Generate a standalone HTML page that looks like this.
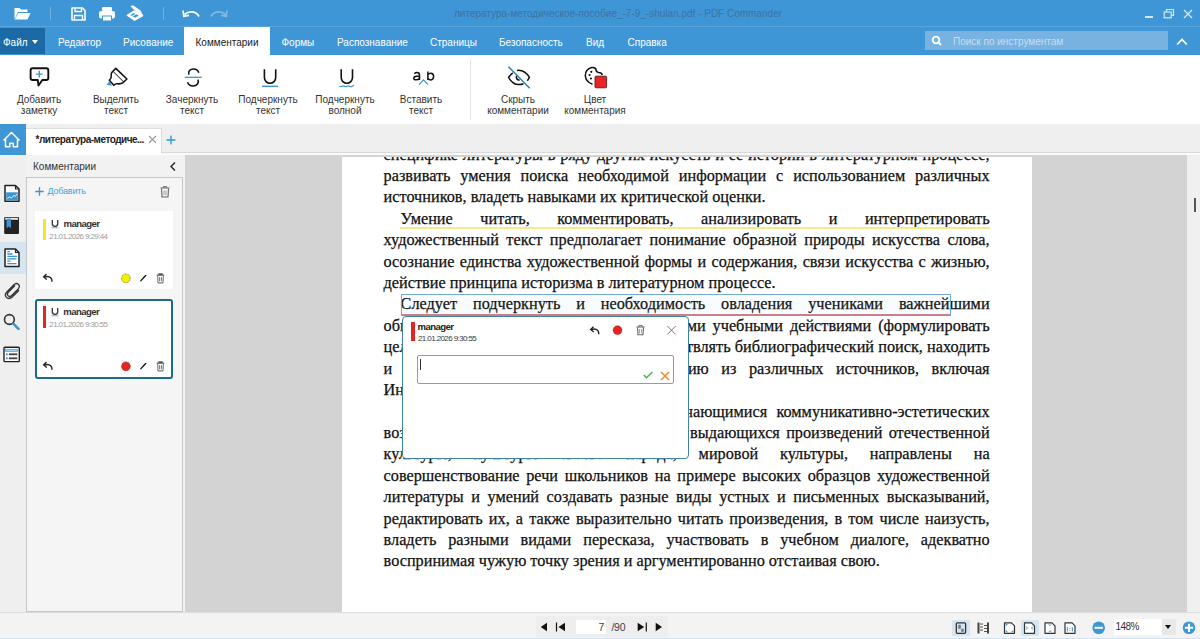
<!DOCTYPE html>
<html><head><meta charset="utf-8">
<style>
*{box-sizing:border-box}
html,body{margin:0;padding:0}
body{width:1200px;height:639px;overflow:hidden;position:relative;background:#f3f3f3;font-family:"Liberation Sans",sans-serif;color:#222}
.abs{position:absolute}
svg{position:absolute;overflow:visible}
.mi{position:absolute;top:0;height:27px;line-height:31px;font-size:10px;color:#fff;white-space:nowrap}
.rl{position:absolute;font-size:10px;line-height:11px;color:#333;text-align:center;white-space:nowrap}
.doc{font-family:"Liberation Serif",serif;font-size:16.25px;line-height:21.42px;color:#111;-webkit-text-stroke:0.25px #111}
.ln{position:absolute;left:42px;width:606px;height:21.42px;white-space:nowrap;text-align:justify;text-align-last:justify}
.ln.i{left:59px;width:589px}
.ln.l{text-align:left;text-align-last:left}
.mgr{position:absolute;font-size:9.6px;font-weight:bold;letter-spacing:-0.6px;color:#333;white-space:nowrap;line-height:12px}
.dt{position:absolute;font-size:8px;letter-spacing:-0.6px;color:#9c9c9c;white-space:nowrap;line-height:10px}
</style></head><body>
<!-- ===== title bar ===== -->
<div class="abs" style="left:0;top:0;width:1200px;height:27px;background:#3e96d6"></div>
<div class="abs" style="left:0;top:26px;width:1200px;height:1px;background:#58a5dd"></div>
<div class="abs" style="left:454px;top:8px;font-size:10px;line-height:12px;color:#41719e;white-space:nowrap">литература-методическое-пособие_-7-9_-shulan.pdf - PDF Commander</div>
<!-- folder -->
<svg style="left:12px;top:5px" width="20" height="17" viewBox="0 0 20 17">
  <path d="M2.5 3 H7.5 L9 4.5 H15.5 V7 H6 L2.5 14.5 Z" fill="#fff"/>
  <path d="M6.3 8 H18.5 L15.5 14.5 H2.8 Z" fill="#fff"/>
</svg>
<div class="abs" style="left:50px;top:7px;width:1px;height:13px;background:#6cb0e2"></div>
<!-- save -->
<svg style="left:70px;top:6px" width="17" height="16" viewBox="0 0 17 16">
  <path d="M2 2 H12.5 L15 4.5 V14 H2 Z" fill="none" stroke="#fff" stroke-width="1.6" stroke-linejoin="round"/>
  <path d="M5 2 V5.5 H11.5 V2" fill="none" stroke="#fff" stroke-width="1.4"/>
  <path d="M4.5 14 V9.5 H12.5 V14" fill="none" stroke="#fff" stroke-width="1.4"/>
</svg>
<!-- print -->
<svg style="left:98px;top:6px" width="18" height="16" viewBox="0 0 18 16">
  <rect x="4" y="1" width="10" height="4" rx="1" fill="#fff"/>
  <rect x="1" y="5" width="16" height="7.5" rx="2" fill="#fff"/>
  <rect x="4" y="9.5" width="10" height="5.5" rx="0.5" fill="#3e96d6"/>
  <rect x="5" y="10.5" width="8" height="4" fill="#fff"/>
</svg>
<!-- scanner -->
<svg style="left:122px;top:2px" width="26" height="22" viewBox="0 0 26 22">
  <path d="M4.8 13.3 L12 8.8 L21 13.8 L12.5 18.6 Z" fill="#fff" stroke="#fff" stroke-width="0.8" stroke-linejoin="round"/>
  <path d="M8.3 13.1 L11.8 11 L16.8 13.6 L13.3 15.8 Z" fill="#3e96d6"/>
  <path d="M10 14.3 L14.6 11.7" stroke="#fff" stroke-width="0.9"/>
  <path d="M8.8 4.3 L11 3.6 L17.8 8.3 L20.8 13.3 L14 9.6 Z" fill="#fff" stroke="#fff" stroke-width="0.6" stroke-linejoin="round"/>
</svg>
<div class="abs" style="left:163px;top:7px;width:1px;height:13px;background:#6cb0e2"></div>
<!-- undo / redo -->
<svg style="left:181px;top:8px" width="20" height="11" viewBox="0 0 20 11">
  <path d="M18 8.5 C15 3 8 2.5 3.5 6.5" fill="none" stroke="#fff" stroke-width="1.7"/>
  <path d="M2 2.5 L2.8 8.2 L8 7.3" fill="none" stroke="#fff" stroke-width="1.7"/>
</svg>
<svg style="left:209px;top:8px" width="20" height="11" viewBox="0 0 20 11" opacity="0.35">
  <path d="M2 8.5 C5 3 12 2.5 16.5 6.5" fill="none" stroke="#fff" stroke-width="1.7"/>
  <path d="M18 2.5 L17.2 8.2 L12 7.3" fill="none" stroke="#fff" stroke-width="1.7"/>
</svg>
<!-- window controls -->
<div class="abs" style="left:1145px;top:16px;width:8px;height:1.6px;background:#d6e8f6"></div>
<svg style="left:1163px;top:8px" width="12" height="11" viewBox="0 0 12 11">
  <rect x="1.2" y="4" width="7" height="5.8" fill="none" stroke="#d6e8f6" stroke-width="1.2"/>
  <path d="M3.5 4 V1.5 H10.5 V7.3 H8.2" fill="none" stroke="#d6e8f6" stroke-width="1.2"/>
</svg>
<svg style="left:1183px;top:9px" width="10" height="10" viewBox="0 0 10 10">
  <path d="M1 1 L9 9 M9 1 L1 9" stroke="#d6e8f6" stroke-width="1.3"/>
</svg>

<!-- ===== menu bar ===== -->
<div class="abs" style="left:0;top:27px;width:1200px;height:28px;background:#3e96d6"></div>
<div class="abs" style="left:0;top:28px;width:45px;height:26px;background:#1b6aa6"></div>
<div class="mi" style="left:3px;top:27px">Файл</div>
<div class="abs" style="left:32px;top:40px;width:0;height:0;border-left:3.5px solid transparent;border-right:3.5px solid transparent;border-top:4px solid #fff"></div>
<div class="mi" style="left:58px;top:27px">Редактор</div>
<div class="mi" style="left:123px;top:27px">Рисование</div>
<div class="abs" style="left:184px;top:27px;width:86px;height:28px;background:#fff"></div>
<div class="mi" style="left:195.5px;top:27px;color:#222">Комментарии</div>
<div class="mi" style="left:281.5px;top:27px">Формы</div>
<div class="mi" style="left:337px;top:27px">Распознавание</div>
<div class="mi" style="left:430px;top:27px">Страницы</div>
<div class="mi" style="left:499px;top:27px">Безопасность</div>
<div class="mi" style="left:586px;top:27px">Вид</div>
<div class="mi" style="left:627.5px;top:27px">Справка</div>
<div class="abs" style="left:925px;top:31px;width:243px;height:19px;background:#77b2e0"></div>
<svg style="left:931px;top:35px" width="12" height="12" viewBox="0 0 12 12">
  <circle cx="5" cy="5" r="3.3" fill="none" stroke="#fff" stroke-width="1.8"/>
  <path d="M7.5 7.5 L10 10" stroke="#fff" stroke-width="2"/>
</svg>
<div class="mi" style="left:953px;top:25.5px;color:#c8dff2">Поиск по инструментам</div>
<svg style="left:1176px;top:37px" width="12" height="9" viewBox="0 0 12 9">
  <path d="M1.2 7.5 L6 2.5 L10.8 7.5" fill="none" stroke="#fff" stroke-width="1.8"/>
</svg>
<!-- ===== ribbon ===== -->
<div class="abs" style="left:0;top:55px;width:1200px;height:69px;background:#fff"></div>
<!-- add note -->
<svg style="left:25px;top:62px" width="30" height="30" viewBox="0 0 30 30">
  <path d="M7.7 6.3 H21.2 Q23.3 6.3 23.3 8.4 V15.9 Q23.3 18 21.2 18 H17.3 L13.5 23.5 L12.8 18 H7.7 Q5.6 18 5.6 15.9 V8.4 Q5.6 6.3 7.7 6.3 Z" fill="#fff" stroke="#111" stroke-width="1.9" stroke-linejoin="round"/>
  <path d="M11 12.1 H17.6 M14.3 8.8 V15.4" stroke="#3a95d0" stroke-width="1.4"/>
</svg>
<!-- highlighter -->
<svg style="left:100px;top:62px" width="30" height="30" viewBox="0 0 30 30">
  <path d="M15.8 6.3 L26.9 17 L23.5 20.3 L12.6 9.6 Z" fill="#fff" stroke="#111" stroke-width="1.6" stroke-linejoin="round"/>
  <path d="M12.6 9.6 Q10.5 11.3 11.2 13.5 Q11.8 16 9.3 18.3 L13.8 23.3 Q15.5 21.3 17.8 21.8 Q20.5 22.3 23.5 20.3" fill="#fff" stroke="#111" stroke-width="1.6" stroke-linejoin="round"/>
  <path d="M9.3 19.3 L6.6 22.8 L12 23.8 Z" fill="#3a95d0"/>
</svg>
<!-- strike -->
<svg style="left:178px;top:62px" width="30" height="30" viewBox="0 0 30 30">
  <path d="M11 12.6 C9.6 9.3 12.3 7 15.5 7 C18 7 20 8.3 20.8 10.8" fill="none" stroke="#111" stroke-width="1.6"/>
  <path d="M19.8 17.6 C21.6 20.6 18.8 24 15.3 24 C12.5 24 10.3 22.5 9.5 20.3" fill="none" stroke="#111" stroke-width="1.6"/>
  <path d="M6.8 15.3 H23.7" stroke="#3a95d0" stroke-width="1.3"/>
</svg>
<!-- underline -->
<svg style="left:255px;top:62px" width="30" height="30" viewBox="0 0 30 30">
  <path d="M9.4 7.2 V15.6 A5.65 5.65 0 0 0 20.7 15.6 V7.2" fill="none" stroke="#111" stroke-width="1.6"/>
  <path d="M7 24.3 H23" stroke="#3a95d0" stroke-width="1.4"/>
</svg>
<!-- wavy -->
<svg style="left:332px;top:62px" width="30" height="30" viewBox="0 0 30 30">
  <path d="M9.2 7.2 V15.6 A5.65 5.65 0 0 0 20.5 15.6 V7.2" fill="none" stroke="#111" stroke-width="1.6"/>
  <path d="M7.5 23.8 Q8.7 25.2 10 24.3 Q11.3 23.3 12.5 24.3 Q13.8 25.2 15 24.3 Q16.3 23.3 17.5 24.3 Q18.8 25.2 20 24.3 Q21.2 23.4 22 23.8" fill="none" stroke="#3a95d0" stroke-width="1.2"/>
</svg>
<!-- insert text -->
<svg style="left:410px;top:68px" width="28" height="18" viewBox="0 0 28 18">
  <path d="M4.3 5.8 Q5.5 4.6 7 4.6 Q9.5 4.6 9.5 7.2 V12.1" fill="none" stroke="#111" stroke-width="1.5"/>
  <path d="M9.5 8.4 Q8.3 8.1 6.5 8.3 Q3.8 8.6 3.8 10.2 Q3.8 11.8 6 11.8 Q8.3 11.8 9.5 10.4" fill="none" stroke="#111" stroke-width="1.5"/>
  <path d="M17.9 3.4 V12.1" stroke="#111" stroke-width="1.5"/>
  <path d="M17.9 6.6 Q19 5.2 20.8 5.2 Q23.6 5.2 23.6 8.6 Q23.6 11.9 20.8 11.9 Q19 11.9 17.9 10.6" fill="none" stroke="#111" stroke-width="1.5"/>
  <path d="M9 16.6 L13.5 11.9 L18 16.6" fill="none" stroke="#3a95d0" stroke-width="1.2"/>
</svg>
<div class="abs" style="left:470px;top:59px;width:1px;height:61px;background:#e3e3e3"></div>
<!-- eye slash -->
<svg style="left:504px;top:62px" width="30" height="30" viewBox="0 0 30 30">
  <path d="M13 8.4 Q20.5 7.5 25.4 15.3 Q24.5 17.2 23.3 18.8" fill="none" stroke="#111" stroke-width="1.5"/>
  <path d="M19.5 21.8 Q10 25 4.6 15.5 Q6.3 12.6 8.8 10.8" fill="none" stroke="#111" stroke-width="1.5"/>
  <path d="M12.6 13.6 Q11.5 17.5 15.6 18.3" fill="none" stroke="#111" stroke-width="1.5"/>
  <path d="M4.5 4.8 L25.7 26.3" stroke="#2586a8" stroke-width="1.5"/>
</svg>
<!-- palette -->
<svg style="left:581px;top:62px" width="30" height="30" viewBox="0 0 30 30">
  <path d="M21.4 13 Q20.5 10.6 17.6 10.5 Q15 10.3 15 7.6 Q14.6 5 10.6 5.5 Q4.6 7 4.3 13.5 Q4.5 19.5 11.5 22.3" fill="none" stroke="#111" stroke-width="1.5"/>
  <circle cx="10.3" cy="9.8" r="1.1" fill="#111"/>
  <circle cx="8.6" cy="13" r="1.1" fill="#111"/>
  <circle cx="9.9" cy="16.5" r="1.1" fill="#111"/>
  <rect x="14" y="14.2" width="11.6" height="11.6" rx="1" fill="#e82424" stroke="#5a1a1a" stroke-width="0.9"/>
</svg>
<div class="rl" style="left:0;width:78px;top:93.7px">Добавить<br>заметку</div>
<div class="rl" style="left:77px;width:78px;top:93.7px">Выделить<br>текст</div>
<div class="rl" style="left:153px;width:78px;top:93.7px">Зачеркнуть<br>текст</div>
<div class="rl" style="left:229px;width:78px;top:93.7px">Подчеркнуть<br>текст</div>
<div class="rl" style="left:306px;width:78px;top:93.7px">Подчеркнуть<br>волной</div>
<div class="rl" style="left:382px;width:78px;top:93.7px">Вставить<br>текст</div>
<div class="rl" style="left:478px;width:80px;top:93.7px">Скрыть<br>комментарии</div>
<div class="rl" style="left:555px;width:80px;top:93.7px">Цвет<br>комментария</div>
<!-- ===== tab row ===== -->
<div class="abs" style="left:0;top:124px;width:1200px;height:31px;background:#efefef"></div>
<div class="abs" style="left:0;top:124px;width:26px;height:31px;background:#3e96d6"></div>
<svg style="left:0;top:124px" width="26" height="31" viewBox="0 0 26 31">
  <path d="M3.5 16.5 L11.5 8.5 L19.5 16.5 M5.5 14.8 V22.7 H9.8 V19.3 H13.2 V22.7 H17.5 V14.8" fill="none" stroke="#fff" stroke-width="1.5" stroke-linejoin="round"/>
</svg>
<div class="abs" style="left:26px;top:128px;width:136px;height:27px;background:#fff;border-top:1.5px solid #dedede;border-right:1px solid #dcdcdc"></div>
<div class="abs" style="left:35.5px;top:134px;font-size:10px;line-height:12px;font-weight:bold;letter-spacing:-0.5px;color:#222;white-space:nowrap">*литература-методиче...</div>
<svg style="left:148px;top:135px" width="9" height="9" viewBox="0 0 9 9">
  <path d="M1 1 L8 8 M8 1 L1 8" stroke="#9a9a9a" stroke-width="1.1"/>
</svg>
<svg style="left:166px;top:135px" width="10" height="10" viewBox="0 0 10 10">
  <path d="M0.5 5 H9.5 M5 0.5 V9.5" stroke="#2b9bd4" stroke-width="1.4"/>
</svg>
<div class="abs" style="left:161px;top:152px;width:1039px;height:1px;background:#d9d9d9"></div>
<div class="abs" style="left:161px;top:153px;width:1039px;height:2px;background:#fbfbfb"></div>

<!-- ===== left icon column ===== -->
<div class="abs" style="left:0;top:155px;width:26px;height:457px;background:#efefef"></div>
<div class="abs" style="left:0;top:242px;width:25.5px;height:32px;background:#d5e5f1"></div>
<!-- doc chart -->
<svg style="left:0;top:180px" width="25" height="25" viewBox="0 0 25 25">
  <path d="M5 5.5 H15.5 L19 9 V21.3 H5 Z" fill="#fff" stroke="#222" stroke-width="1.5" stroke-linejoin="round"/>
  <path d="M15.5 5.5 V9 H19" fill="none" stroke="#222" stroke-width="1.2"/>
  <rect x="6.2" y="12.3" width="11.6" height="8" fill="#3a95d0"/>
  <path d="M7.2 18.5 L9.5 17 L11.5 17.8 L14 15.5 L15.5 16.3 L17 14" fill="none" stroke="#fff" stroke-width="0.9"/>
</svg>
<!-- book -->
<svg style="left:0;top:213px" width="25" height="25" viewBox="0 0 25 25">
  <rect x="4.2" y="4" width="14.8" height="17" rx="1" fill="#222"/>
  <rect x="5.2" y="4.8" width="12.8" height="2" fill="#e8e8e8"/>
  <path d="M6.5 5.8 H11 V15.3 L8.75 13.5 L6.5 15.3 Z" fill="#3a95d0"/>
</svg>
<!-- doc lines (selected) -->
<svg style="left:0;top:245px" width="25" height="25" viewBox="0 0 25 25">
  <path d="M5 4 H15.5 L19 7.5 V21.5 H5 Z" fill="#fff" stroke="#222" stroke-width="1.5" stroke-linejoin="round"/>
  <path d="M15.5 4 V7.5 H19" fill="none" stroke="#222" stroke-width="1.2"/>
  <path d="M7.3 6.6 H10 M7.3 9 H12.5 M7.3 11.4 H17 M7.3 13.8 H16.5 M7.3 16.2 H10.5 M7.3 18.6 H16.5" stroke="#3a95d0" stroke-width="1.3"/>
</svg>
<!-- paperclip -->
<svg style="left:0;top:280px" width="25" height="20" viewBox="0 0 25 20">
  <path d="M15 5.5 L8.2 12.3 Q6.5 14.5 8.3 16 Q10 17.3 12 15.3 L18.2 9 Q20.5 6.3 18.3 4.3 Q16.2 2.5 13.7 5 L6.8 12 Q4 15.3 6.5 17.6 Q9.3 19.8 12.8 16.5 L19 10.2" fill="none" stroke="#333" stroke-width="1.3"/>
</svg>
<!-- search -->
<svg style="left:0;top:310px" width="25" height="25" viewBox="0 0 25 25">
  <circle cx="9.4" cy="9.5" r="4.9" fill="none" stroke="#333" stroke-width="1.6"/>
  <path d="M13.5 13.8 L18.5 18.8" stroke="#3a95d0" stroke-width="2.6" stroke-linecap="round"/>
</svg>
<!-- list -->
<svg style="left:0;top:342px" width="25" height="25" viewBox="0 0 25 25">
  <rect x="4" y="5.3" width="15.3" height="14.3" rx="0.8" fill="#fff" stroke="#222" stroke-width="1.4"/>
  <rect x="5.6" y="7.2" width="12" height="2.3" fill="#9fd0ee" stroke="#3a95d0" stroke-width="0.6"/>
  <circle cx="6.8" cy="12.3" r="1.1" fill="#3a95d0"/>
  <circle cx="6.8" cy="16.3" r="1.1" fill="#3a95d0"/>
  <rect x="8.8" y="11.4" width="8.5" height="1.8" fill="#444"/>
  <rect x="8.8" y="15.4" width="8.5" height="1.8" fill="#444"/>
</svg>

<!-- ===== comments panel ===== -->
<div class="abs" style="left:26px;top:155px;width:159px;height:457px;background:#f2f2f2"></div>
<div class="abs" style="left:33px;top:161px;font-size:10px;line-height:12px;color:#333;white-space:nowrap">Комментарии</div>
<svg style="left:169px;top:161px" width="8" height="11" viewBox="0 0 8 11">
  <path d="M6 1.5 L2 5.5 L6 9.5" fill="none" stroke="#222" stroke-width="1.4"/>
</svg>
<div class="abs" style="left:26px;top:177px;width:156.5px;height:435px;background:#f5f5f5;border:1px solid #c6c6c6"></div>
<svg style="left:35px;top:187px" width="9" height="9" viewBox="0 0 9 9">
  <path d="M0.3 4.5 H8.7 M4.5 0.3 V8.7" stroke="#3a95d0" stroke-width="1.3"/>
</svg>
<div class="abs" style="left:47.5px;top:186px;font-size:9px;line-height:11px;letter-spacing:-0.2px;color:#4d9fd6;white-space:nowrap">Добавить</div>
<svg style="left:159px;top:185px" width="12" height="13" viewBox="0 0 12 13">
  <path d="M1.5 3 H10.5 M4.3 3 V1.7 H7.7 V3" fill="none" stroke="#666" stroke-width="1"/>
  <path d="M2.5 3.5 L3 12 H9 L9.5 3.5" fill="none" stroke="#666" stroke-width="1.1"/>
  <path d="M5 5.5 V10.2 M7 5.5 V10.2" stroke="#888" stroke-width="0.8"/>
</svg>

<!-- card 1 -->
<div class="abs" style="left:35px;top:211px;width:137.5px;height:78px;background:#fff"></div>
<div class="abs" style="left:42.8px;top:218.6px;width:3.3px;height:21px;background:#f3e626"></div>
<svg style="left:50px;top:219px" width="10" height="10" viewBox="0 0 10 10">
  <path d="M2.3 1 V4.8 Q2.3 7.4 5 7.4 Q7.7 7.4 7.7 4.8 V1" fill="none" stroke="#333" stroke-width="1.3"/>
  <path d="M1.5 8.8 H8.5" stroke="#5aa5d8" stroke-width="0.9"/>
</svg>
<div class="mgr" style="left:63.5px;top:218.3px">manager</div>
<div class="dt" style="left:49.3px;top:231.6px">21.01.2026 9:29:44</div>
<svg style="left:42px;top:272px" width="12" height="12" viewBox="0 0 12 12">
  <path d="M2 5 Q6.5 3.5 9 6 Q10 7.2 10 9.8" fill="none" stroke="#222" stroke-width="1.4"/>
  <path d="M4.5 2 L1.7 5 L4.8 7.5" fill="none" stroke="#222" stroke-width="1.4"/>
</svg>
<svg style="left:120px;top:272px" width="12" height="12" viewBox="0 0 12 12">
  <circle cx="5.9" cy="6.3" r="4.4" fill="#f4ee00" stroke="#6a6a20" stroke-width="0.7" stroke-dasharray="1 0.6"/>
</svg>
<svg style="left:138px;top:273px" width="10" height="10" viewBox="0 0 10 10">
  <path d="M1.7 8.6 L2.4 7.2 L7.2 2.1 Q8.2 1.6 8.7 2.6 L3.4 8 Z" fill="#111"/>
</svg>
<svg style="left:155px;top:272px" width="11" height="12" viewBox="0 0 11 12">
  <path d="M1.8 3.2 H9.2 M4 3 V1.9 H7 V3" fill="none" stroke="#555" stroke-width="1.2"/>
  <path d="M2.6 3.6 L3 10.4 Q3 10.9 3.5 10.9 H7.5 Q8 10.9 8 10.4 L8.4 3.6" fill="none" stroke="#777" stroke-width="1.1"/>
  <path d="M4.6 5.2 V9.2 M6.4 5.2 V9.2" stroke="#666" stroke-width="0.9"/>
</svg>

<!-- card 2 -->
<div class="abs" style="left:34.5px;top:298.5px;width:138.5px;height:80px;background:#fff;border:2px solid #1c6a8a;border-radius:3px"></div>
<div class="abs" style="left:42.6px;top:306.4px;width:3.4px;height:21.2px;background:#e42525"></div>
<svg style="left:50px;top:307px" width="10" height="10" viewBox="0 0 10 10">
  <path d="M2.3 1 V4.8 Q2.3 7.4 5 7.4 Q7.7 7.4 7.7 4.8 V1" fill="none" stroke="#333" stroke-width="1.3"/>
  <path d="M1.5 8.8 H8.5" stroke="#5aa5d8" stroke-width="0.9"/>
</svg>
<div class="mgr" style="left:63.3px;top:306.3px">manager</div>
<div class="dt" style="left:49.3px;top:319.6px">21.01.2026 9:30:55</div>
<svg style="left:42px;top:360px" width="12" height="12" viewBox="0 0 12 12">
  <path d="M2 5 Q6.5 3.5 9 6 Q10 7.2 10 9.8" fill="none" stroke="#222" stroke-width="1.4"/>
  <path d="M4.5 2 L1.7 5 L4.8 7.5" fill="none" stroke="#222" stroke-width="1.4"/>
</svg>
<svg style="left:120px;top:360px" width="12" height="12" viewBox="0 0 12 12">
  <circle cx="5.9" cy="6.3" r="4.4" fill="#e82222" stroke="#801010" stroke-width="0.7" stroke-dasharray="1 0.6"/>
</svg>
<svg style="left:138px;top:361px" width="10" height="10" viewBox="0 0 10 10">
  <path d="M1.7 8.6 L2.4 7.2 L7.2 2.1 Q8.2 1.6 8.7 2.6 L3.4 8 Z" fill="#111"/>
</svg>
<svg style="left:155px;top:360px" width="11" height="12" viewBox="0 0 11 12">
  <path d="M1.8 3.2 H9.2 M4 3 V1.9 H7 V3" fill="none" stroke="#555" stroke-width="1.2"/>
  <path d="M2.6 3.6 L3 10.4 Q3 10.9 3.5 10.9 H7.5 Q8 10.9 8 10.4 L8.4 3.6" fill="none" stroke="#777" stroke-width="1.1"/>
  <path d="M4.6 5.2 V9.2 M6.4 5.2 V9.2" stroke="#666" stroke-width="0.9"/>
</svg>
<!-- ===== document area ===== -->
<div class="abs" style="left:185px;top:155px;width:1002px;height:457px;background:#d3d3d3"></div>
<div class="abs" style="left:182.5px;top:155px;width:2.5px;height:457px;background:#f2f2f2"></div>
<div class="abs" style="left:1187px;top:155px;width:13px;height:457px;background:#f0f0f0"></div>
<div class="abs" style="left:1193.5px;top:198px;width:2px;height:13.5px;background:#555"></div>
<div id="page" class="abs doc" style="left:341.6px;top:157px;width:690.4px;height:454.5px;background:#fff;overflow:hidden">
<div class="ln" style="top:-12.50px">специфике литературы в ряду других искусств и ее истории в литературном процессе,</div>
<div class="ln" style="top:8.92px">развивать умения поиска необходимой информации с использованием различных</div>
<div class="ln l" style="top:30.34px">источников, владеть навыками их критической оценки.</div>
<div class="ln i" style="top:51.76px">Умение читать, комментировать, анализировать и интерпретировать</div>
<div class="ln" style="top:73.18px">художественный текст предполагает понимание образной природы искусства слова,</div>
<div class="ln" style="top:94.60px">осознание единства художественной формы и содержания, связи искусства с жизнью,</div>
<div class="ln l" style="top:116.02px">действие принципа историзма в литературном процессе.</div>
<div class="ln i" style="top:137.44px">Следует подчеркнуть и необходимость овладения учениками важнейшими</div>
<div class="ln" style="top:158.86px">общеучебными умениями и универсальными учебными действиями (формулировать</div>
<div class="ln" style="top:180.28px">цели деятельности, планировать ее, осуществлять библиографический поиск, находить</div>
<div class="ln" style="top:201.70px">и обрабатывать необходимую информацию из различных источников, включая</div>
<div class="ln l" style="top:223.12px">Интернет и др.).</div>
<div class="ln l" style="top:244.54px"><span style="position:absolute;left:300.7px">нающимися</span><span style="position:absolute;right:0">коммуникативно-эстетических</span></div>
<div class="ln" style="top:265.96px">возможностями языка на основе изучения выдающихся произведений отечественной</div>
<div class="ln" style="top:287.38px">культуры, культуры своего народа, мировой культуры, направлены на</div>
<div class="ln" style="top:308.80px">совершенствование речи школьников на примере высоких образцов художественной</div>
<div class="ln" style="top:330.22px">литературы и умений создавать разные виды устных и письменных высказываний,</div>
<div class="ln" style="top:351.64px">редактировать их, а также выразительно читать произведения, в том числе наизусть,</div>
<div class="ln" style="top:373.06px">владеть разными видами пересказа, участвовать в учебном диалоге, адекватно</div>
<div class="ln l" style="top:394.48px">воспринимая чужую точку зрения и аргументированно отстаивая свою.</div>
</div>
<!-- annotations -->
<div class="abs" style="left:400px;top:226.5px;width:590px;height:2.2px;background:#f6eb86"></div>
<div class="abs" style="left:401px;top:294.2px;width:549.5px;height:22px;background:rgba(90,170,220,0.035);border:1.2px solid #73abc9"></div>
<div class="abs" style="left:401px;top:313.6px;width:549px;height:2px;background:#c9808c"></div>
<!-- popup -->
<div class="abs" style="left:401.5px;top:316px;width:287px;height:142.5px;background:#fff;border:1.2px solid #3f82a3;border-radius:4px"></div>
<div class="abs" style="left:410.6px;top:322px;width:4.6px;height:19px;background:#e42424"></div>
<div class="mgr" style="left:417.5px;top:320.9px;color:#222">manager</div>
<div class="dt" style="left:418px;top:334px;color:#3a3a3a">21.01.2026 9:30:55</div>
<svg style="left:589px;top:325px" width="12" height="12" viewBox="0 0 12 12">
  <path d="M2 4.5 Q6.5 3 8.8 5.5 Q9.8 6.7 9.8 9.3" fill="none" stroke="#222" stroke-width="1.4"/>
  <path d="M4.5 1.7 L1.7 4.5 L4.8 7" fill="none" stroke="#222" stroke-width="1.4"/>
</svg>
<svg style="left:611px;top:324px" width="12" height="12" viewBox="0 0 12 12">
  <circle cx="6.5" cy="6.2" r="4.4" fill="#e82222" stroke="#801010" stroke-width="0.7" stroke-dasharray="1 0.6"/>
</svg>
<svg style="left:635px;top:324px" width="11" height="12" viewBox="0 0 11 12">
  <path d="M1.5 3 H9.5 M3.8 3 V1.7 H7.2 V3" fill="none" stroke="#666" stroke-width="1"/>
  <path d="M2.5 3.3 L3 10.8 H8 L8.5 3.3" fill="none" stroke="#666" stroke-width="1.1"/>
  <path d="M4.5 5 V9.3 M6.5 5 V9.3" stroke="#888" stroke-width="0.8"/>
</svg>
<svg style="left:666px;top:325px" width="11" height="11" viewBox="0 0 11 11">
  <path d="M1.3 1 L9.7 9.4 M9.7 1 L1.3 9.4" stroke="#777" stroke-width="1"/>
</svg>
<div class="abs" style="left:416.5px;top:355px;width:257px;height:28.5px;background:#fff;border:1.5px solid #6aaac8;border-radius:2px"></div>
<div class="abs" style="left:420px;top:358.5px;width:1px;height:11px;background:#333"></div>
<svg style="left:642px;top:370px" width="12" height="10" viewBox="0 0 12 10">
  <path d="M1.8 5 L4.5 7.8 L10.5 2" fill="none" stroke="#4caf50" stroke-width="1.4"/>
</svg>
<svg style="left:660px;top:371px" width="10" height="10" viewBox="0 0 10 10">
  <path d="M1 1 L9 9 M9 1 L1 9" stroke="#f0862e" stroke-width="1.5"/>
</svg>

<!-- ===== status bar ===== -->
<div class="abs" style="left:0;top:612px;width:1200px;height:27px;background:#f3f3f3"></div>
<div class="abs" style="left:0;top:611.5px;width:1200px;height:1.5px;background:#dddddd"></div>
<div class="abs" style="left:0;top:637.6px;width:1200px;height:1.4px;background:#d0e2ef"></div>
<div class="abs" style="left:535.5px;top:616px;width:132px;height:20.5px;background:#eeeeee"></div>
<svg style="left:538px;top:620px" width="130" height="14" viewBox="0 0 130 14">
  <path d="M9 2.7 V11.2 L2.7 7 Z" fill="#111"/>
  <path d="M18.5 2.5 V11.5" stroke="#111" stroke-width="1.2"/>
  <path d="M27 2.7 V11.2 L20.5 7 Z" fill="#111"/>
  <path d="M99.7 2.7 V11.2 L106.2 7 Z" fill="#111"/>
  <path d="M108.3 2.5 V11.5" stroke="#111" stroke-width="1.2"/>
  <path d="M117.7 2.7 V11.2 L124 7 Z" fill="#111"/>
</svg>
<div class="abs" style="left:575.5px;top:620px;width:30.7px;height:14px;background:#fff"></div>
<div class="abs" style="left:598.5px;top:621px;font-size:10.5px;line-height:12px;color:#444;white-space:nowrap">7</div>
<div class="abs" style="left:611.5px;top:621px;font-size:10.5px;line-height:12px;color:#444;white-space:nowrap;letter-spacing:-0.3px">/90</div>
<!-- view icons -->
<div class="abs" style="left:952.2px;top:619.6px;width:17.6px;height:16.2px;background:#d5e5f1"></div>
<div class="abs" style="left:1021.1px;top:619.6px;width:18.4px;height:16.2px;background:#d5e5f1"></div>
<svg style="left:950px;top:618px" width="130" height="20" viewBox="0 0 130 20">
  <rect x="6.3" y="4.8" width="9.3" height="10.5" rx="1" fill="none" stroke="#333" stroke-width="1.3"/>
  <rect x="8.3" y="6.8" width="2.5" height="4" fill="#777"/>
  <rect x="11.2" y="10.8" width="2.5" height="3" fill="#777"/>
  <path d="M28.5 4.5 V15.5 M38 4.5 V15.5" stroke="#444" stroke-width="2"/>
  <path d="M30 6 H33 M30 9 H33 M30 12 H33 M34 7.5 H37 M34 10.5 H37 M34 13.5 H37" stroke="#555" stroke-width="1.1"/>
  <path d="M54.5 4.8 H61.5 L64.5 7.8 V15.3 H54.5 Z" fill="#fff" stroke="#333" stroke-width="1.2" stroke-linejoin="round"/>
  <path d="M56 6.5 L57.5 6.5 M56 6.5 V8 M63 13.8 H61.5 M63 13.8 V12.3 M56 13.8 H57.5 M56 13.8 V12.3" stroke="#3a95d0" stroke-width="1"/>
  <path d="M74.5 4.8 H81.5 L84.5 7.8 V15.3 H74.5 Z" fill="#fff" stroke="#333" stroke-width="1.2" stroke-linejoin="round"/>
  <path d="M76 8.5 L77.5 10 L76 11.5 M83 8.5 L81.5 10 L83 11.5" fill="none" stroke="#3a95d0" stroke-width="1"/>
  <path d="M95 4.8 H102 L105 7.8 V15.3 H95 Z" fill="#fff" stroke="#333" stroke-width="1.2" stroke-linejoin="round"/>
  <path d="M98.5 6.3 L100 7.5 L101.5 6.3 M98.5 14 L100 12.8 L101.5 14" fill="none" stroke="#3a95d0" stroke-width="0.9"/>
  <path d="M115 4.8 H122 L125 7.8 V15.3 H115 Z" fill="#fff" stroke="#333" stroke-width="1.2" stroke-linejoin="round"/>
  <path d="M117.3 9 V13.5 M122.3 9 V13.5 M119.8 10 V10.8 M119.8 12.3 V13" stroke="#3a95d0" stroke-width="1"/>
</svg>
<svg style="left:1090px;top:619px" width="110" height="18" viewBox="0 0 110 18">
  <circle cx="8.7" cy="8.8" r="6.3" fill="#3c97d3"/>
  <path d="M4.6 8.8 H12.8" stroke="#fff" stroke-width="2"/>
  <circle cx="99" cy="8.8" r="6.3" fill="#3c97d3"/>
  <path d="M94.9 8.8 H103.1 M99 4.7 V12.9" stroke="#fff" stroke-width="2"/>
</svg>
<div class="abs" style="left:1113.8px;top:619.2px;width:48.4px;height:15.8px;background:#fff"></div>
<div class="abs" style="left:1162.2px;top:619.2px;width:13.4px;height:15.8px;background:#e8e8e8"></div>
<div class="abs" style="left:1165px;top:625.4px;width:0;height:0;border-left:3.6px solid transparent;border-right:3.6px solid transparent;border-top:4px solid #111"></div>
<div class="abs" style="left:1115.5px;top:620.5px;font-size:10px;line-height:12px;letter-spacing:-0.6px;color:#333;white-space:nowrap">148%</div>

</body></html>
